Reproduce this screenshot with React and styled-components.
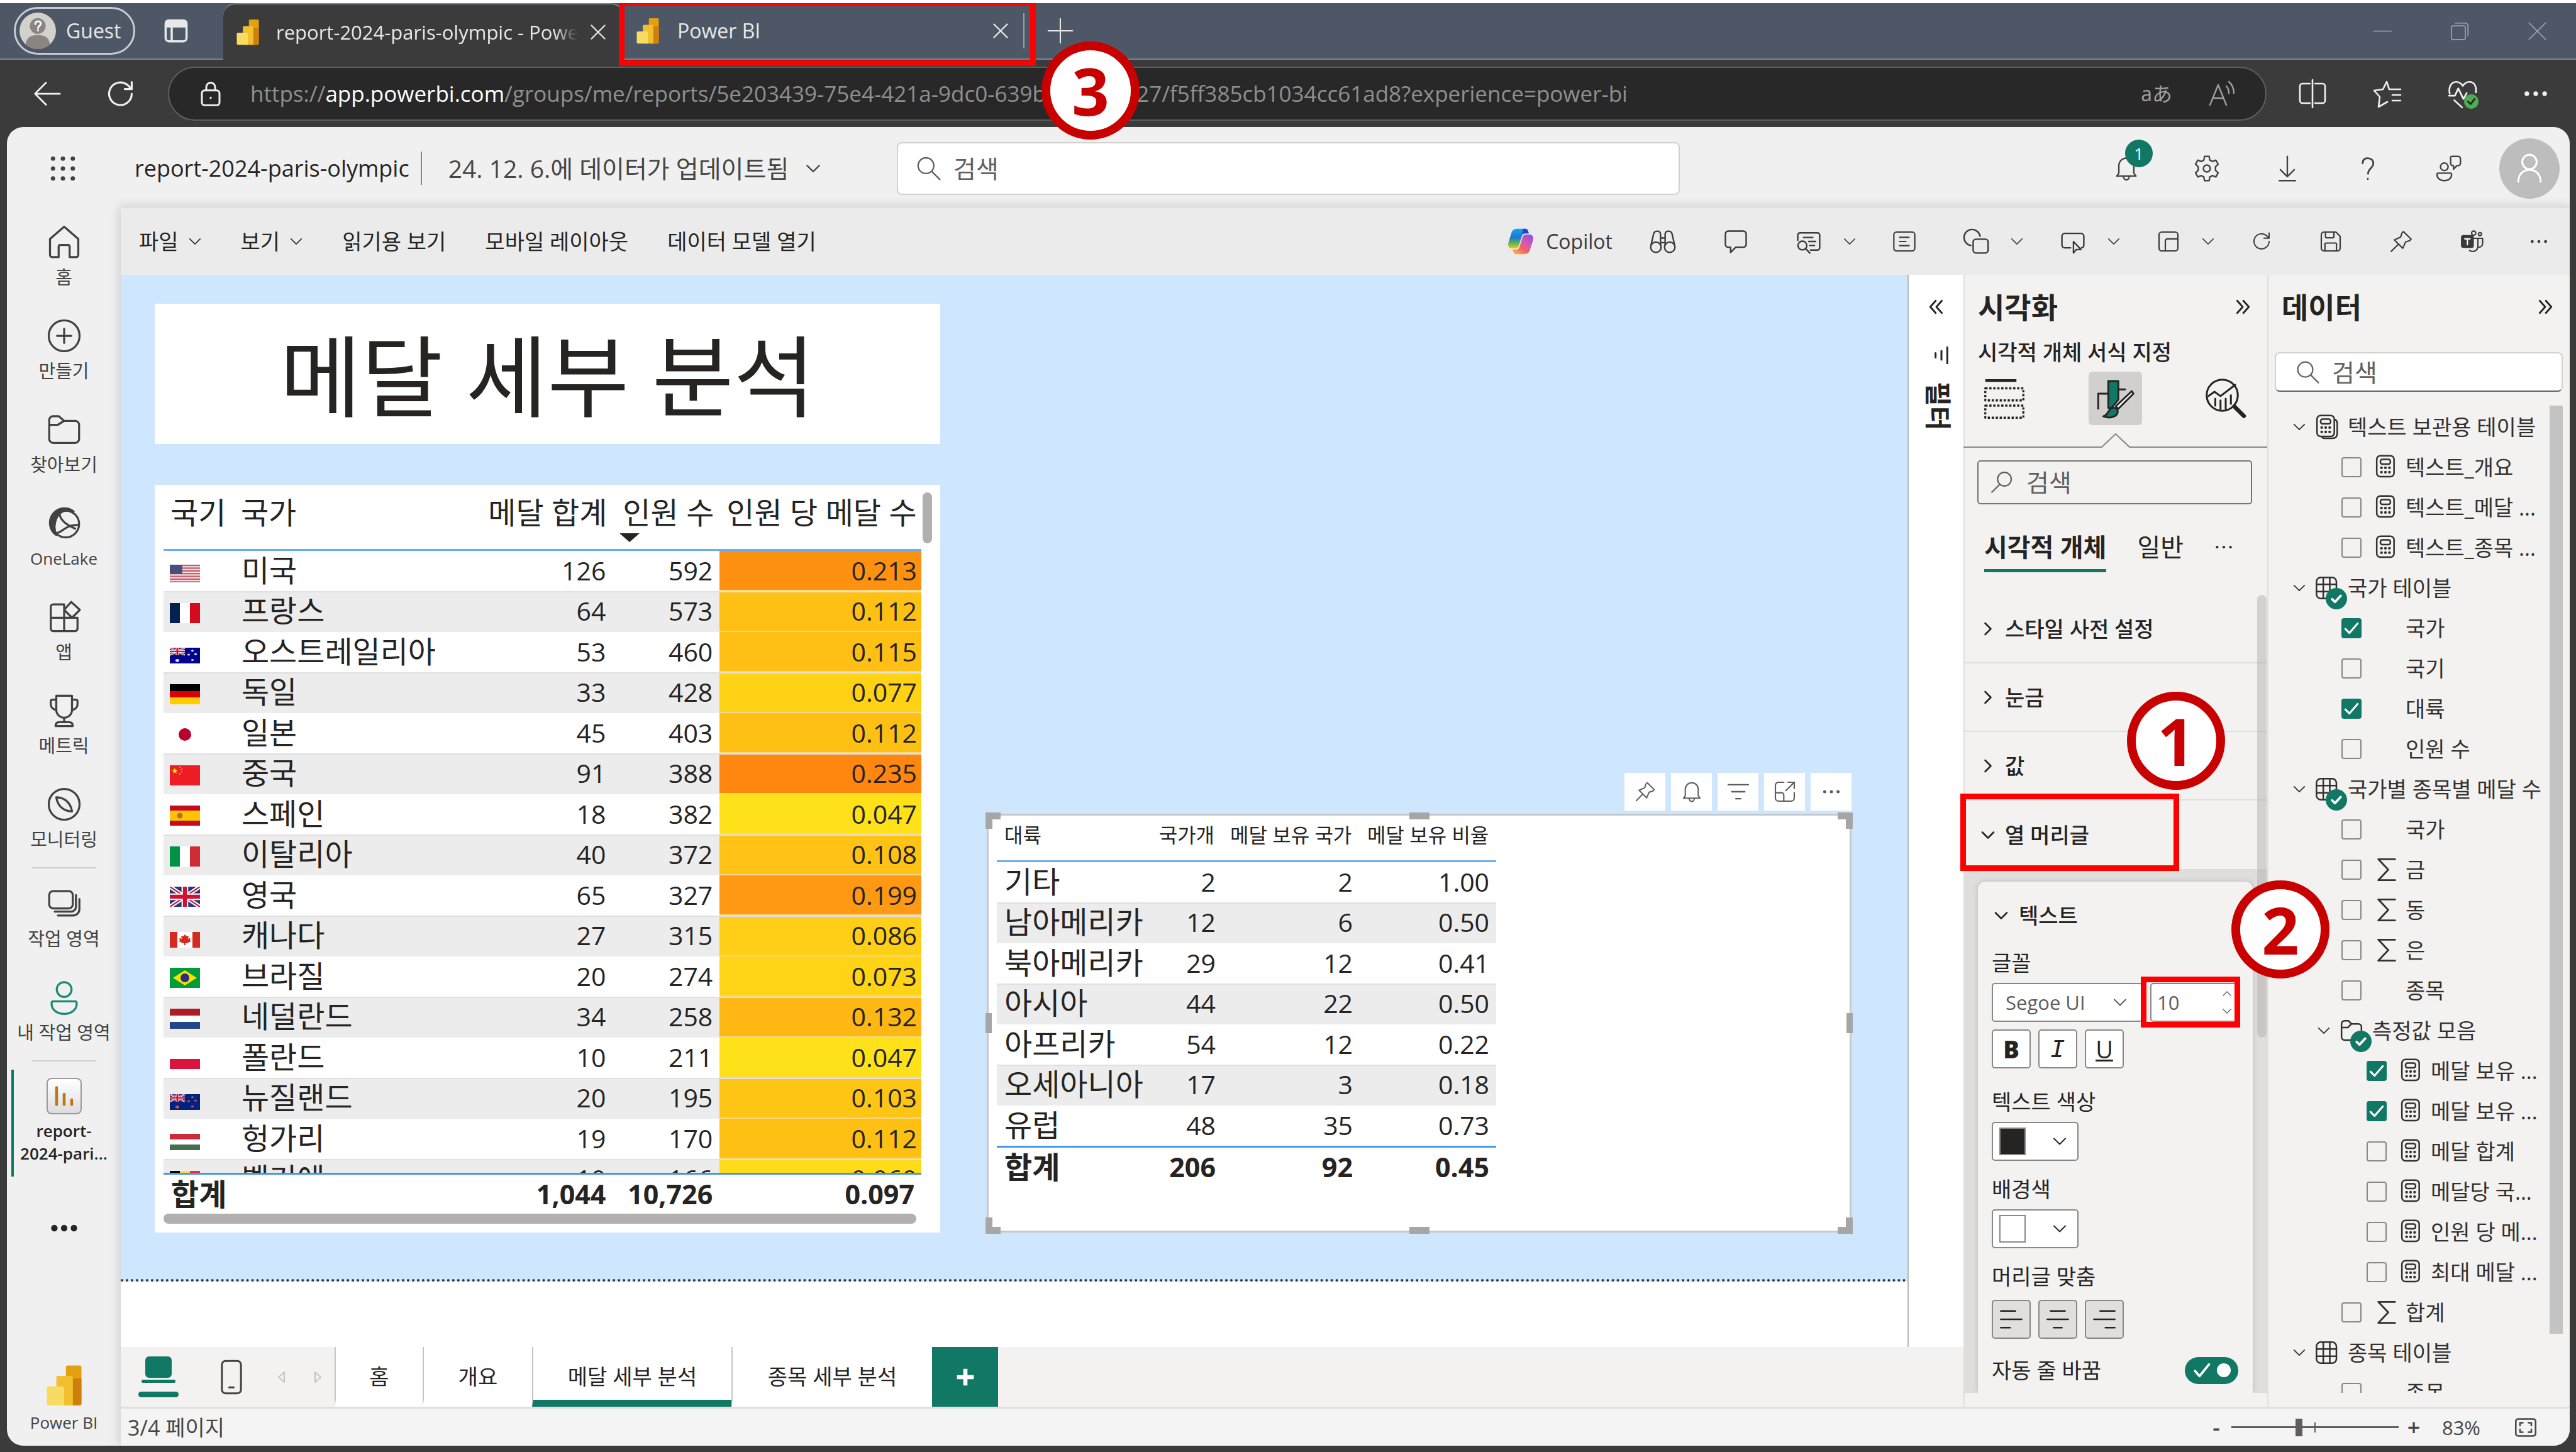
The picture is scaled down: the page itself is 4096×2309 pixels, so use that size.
import React from "react";
import styled, { createGlobalStyle, css } from "styled-components";

const LATIN = '"Open Sans", "Noto Sans", "Noto Sans CJK KR", sans-serif';
const GREEN = "#117865";
const RED = "#ff0000";
const DARK = "#3b3b3b";
const PANE = "#f3f2f1";
const INK = "#252423";

const Global = createGlobalStyle`
  *, *::before, *::after { box-sizing: border-box; }
  html, body { margin: 0; background: ${DARK}; }
  body { font-family: ${LATIN}; color: ${INK}; font-size: 34px; line-height: 44px; }
  button, input, select { font: inherit; color: inherit; margin: 0; }
  button { background: none; border: 0; padding: 0; cursor: pointer; }
  table { border-spacing: 0; }
  th { font-weight: 400; text-align: left; }
  td, th { padding: 0; }
`;

/* ---------- icons ---------- */

const Svg = styled.svg`
  display: block;
  flex: none;
  width: ${(p) => p.$w || p.$s}px;
  height: ${(p) => p.$s}px;
  fill: none;
  stroke: currentColor;
  stroke-width: ${(p) => p.$k || 1.3};
  stroke-linecap: round;
  stroke-linejoin: round;
`;

const Icon = ({ s = 44, k, w, box = "0 0 24 24", children }) => (
  <Svg $s={s} $w={w} $k={k} viewBox={box} aria-hidden="true">{children}</Svg>
);

const Chevron = ({ s = 24, dir = "down", k = 2 }) => {
  const d = { down: "M3 7.5 12 16.5 21 7.5", up: "M3 16.5 12 7.5 21 16.5", right: "M7.5 3 16.5 12 7.5 21" }[dir];
  return <Icon s={s} k={k}><path d={d} /></Icon>;
};

const DoubleChevron = ({ left }) => (
  <Icon s={26} k={2.6}>
    {left ? <path d="M11 3 3 12 11 21M20 3 12 12 20 21" /> : <path d="M4 3 12 12 4 21M13 3 21 12 13 21" />}
  </Icon>
);

const Cross = ({ s = 26, k = 2 }) => <Icon s={s} k={k}><path d="M3 3 21 21M21 3 3 21" /></Icon>;

const Dots = ({ s = 34, r = 2.2 }) => (
  <Icon s={s} k={0}>
    <g fill="currentColor" stroke="none"><circle cx="3.5" cy="12" r={r} /><circle cx="12" cy="12" r={r} /><circle cx="20.5" cy="12" r={r} /></g>
  </Icon>
);

const Magnifier = ({ s = 40, flip }) => (
  <Icon s={s} k={1.3}>
    {flip ? <><circle cx="14.5" cy="9" r="6.5" /><path d="M10 14 2.5 21.5" /></> : <><circle cx="10" cy="9.5" r="6.8" /><path d="M15 14.5 22 21.5" /></>}
  </Icon>
);

const PinIcon = ({ s = 40 }) => (
  <Icon s={s}><path d="M14.2 2.5 21.500 9.800 20 11.300 16.200 12.500 13.500 18.500 5.500 10.500 11.500 7.800 12.700 4ZM9 15 2.500 21.500" /></Icon>
);

const BellIcon = ({ s = 44 }) => (
  <Icon s={s}><path d="M5.500 16V9.500a6.500 6.500 0 0 1 13 0V16l1.800 2.500H3.700ZM9.500 19a2.500 2.800 0 0 0 5 0" /></Icon>
);

const PowerBiLogo = ({ s = 44 }) => (
  <Svg $s={s} viewBox="0 0 24 24" aria-hidden="true">
    <g stroke="none">
      <rect x="13" y="0.500" width="9" height="23" rx="1" fill="#e3a010" />
      <path d="M17 8h5v14.500a1 1 0 0 1-1 1h-4Z" fill="#cf7f0b" />
      <path d="M7.500 7.500a1 1 0 0 1 1-1h7.500a1 1 0 0 1 1 1v16H7.500Z" fill="#f0c02f" />
      <path d="M2 13.500a1 1 0 0 1 1-1h7.500a1.500 1.500 0 0 1 1.500 1.500v9.500H3a1 1 0 0 1-1-1Z" fill="#f8dc62" />
    </g>
  </Svg>
);

const CopilotLogo = () => (
  <Svg $s={44} viewBox="0 0 24 24" aria-hidden="true">
    <defs>
      <linearGradient id="cpA" x1="0" y1="0" x2="0" y2="1"><stop offset="0" stopColor="#12a7ee" /><stop offset="0.450" stopColor="#1d74d8" /><stop offset="0.700" stopColor="#4db35a" /><stop offset="1" stopColor="#f2c516" /></linearGradient>
      <linearGradient id="cpB" x1="1" y1="0" x2="0.300" y2="1"><stop offset="0" stopColor="#8a4be0" /><stop offset="0.450" stopColor="#d557b6" /><stop offset="0.750" stopColor="#f2655e" /><stop offset="1" stopColor="#ffa24c" /></linearGradient>
    </defs>
    <g stroke="none">
      <path d="M10 1h6c1.800 0 2.400 1.500 3 4h-3.500c-1.300 0-2 .8-2.500 2.300l-2.500 8c-.6 2-1.600 2.700-3.500 2.700H4.500C1.500 18 .6 15.600 1.500 12.500L4 4.500C4.800 2 6.500 1 10 1Z" fill="url(#cpA)" />
      <path d="M14 1h2c1.800 0 2.400 1.500 3 4h-3.500c-1 0-1.800.5-2.200 1.500Z" fill="#1b48cf" />
      <path d="M14 23H8c-1.800 0-2.400-1.500-3-4h3.500c1.300 0 2-.8 2.500-2.300l2.500-8C14.100 6.700 15.100 6 17 6h2.500c3 0 3.900 2.400 3 5.500L20 19.500c-.8 2.500-2.500 3.500-6 3.500Z" fill="url(#cpB)" />
    </g>
  </Svg>
);

const CalcIcon = ({ s = 40, stacked }) => (
  <Icon s={s} k={1.500}>
    {stacked && <path d="M20 5c1.300.8 1.800 1.800 1.800 3.500V18c0 3-1.500 4.800-4.800 4.800h-7c-1.500 0-2.400-.5-3-1.300" />}
    <rect x="2.500" y="1" width="16.500" height="20" rx="3.500" />
    <rect x="6" y="4.500" width="9.500" height="4.500" rx="1.800" />
    <g fill="currentColor" stroke="none">
      {[12.500, 16.700].map((y) => [7, 10.800, 14.600].map((x) => <circle key={x + "-" + y} cx={x} cy={y} r="1.300" />))}
    </g>
  </Icon>
);

const TableIcon = () => (
  <Icon s={40} k={1.500}><rect x="2" y="2" width="19" height="20" rx="4" /><path d="M8.500 2v20M14.700 2v20M2 8.500h19M2 15.500h19" /></Icon>
);

const FolderIcon = () => (
  <Icon s={40} k={1.500}><path d="M2.500 7V5.500a3 3 0 0 1 3-3h3.500l3 3h6.500a3 3 0 0 1 3 3v9.500a3 3 0 0 1-3 3h-13a3 3 0 0 1-3-3ZM2.500 9h6l3.500-3.500" /></Icon>
);

const SigmaIcon = () => <Icon s={40} k={1.700}><path d="M20 2H4l9.500 10L4 22h16" /></Icon>;

const navIcons = {
  home: <path d="M3 10 12 2.200 21 10v10.200a1.300 1.300 0 0 1-1.300 1.300H15.500v-6.700a1 1 0 0 0-1-1h-5a1 1 0 0 0-1 1v6.700H4.300A1.300 1.300 0 0 1 3 20.200Z" />,
  create: <><circle cx="12" cy="12" r="9.800" /><path d="M12 7.500v9M7.500 12h9" /></>,
  browse: <path d="M2.500 7.500V6a2.500 2.500 0 0 1 2.500-2.500h3.500l3.500 3h7A2.500 2.500 0 0 1 21.500 9v9a2.500 2.500 0 0 1-2.500 2.500H5A2.500 2.500 0 0 1 2.500 18ZM2.500 9h5.500l4-2.500" />,
  lake: <>
    <path d="M5 6a9.300 9.300 0 0 1 13-1.500c-5-1.500-9 0-11 4.500-1.300 3-1.500 7 0 10.500A9.300 9.300 0 0 1 5 6Z" fill="currentColor" />
    <circle cx="13" cy="12.500" r="8.500" /><path d="M9 6c1 5 5 7 10 9.500M6 18.500c5 0 6-5.500 15-5.500" />
  </>,
  apps: <path d="M3.500 5.500a1.500 1.500 0 0 1 1.500-1.500h7v17H5a1.500 1.500 0 0 1-1.500-1.500ZM3.500 12.500h17v7a1.500 1.500 0 0 1-1.500 1.500h-7M16.500 2.500 22 7.500l-5 5-5-5Z" />,
  trophy: <path d="M7 2.500h10v9a5 5 0 0 1-10 0ZM7 5H4.500a1 1 0 0 0-1 1v2a3.500 3.500 0 0 0 3.500 3.500M17 5h2.500a1 1 0 0 1 1 1v2a3.500 3.500 0 0 1-3.500 3.500M12 16.500v2.500M6.500 21.800c0-1.800 1-2.500 2.500-2.500h6c1.500 0 2.500.7 2.500 2.500Z" />,
  compass: <><circle cx="12" cy="12" r="9.800" /><path d="M7 7.500c4 0 9 2.500 10 9-4.500 0-9-2.500-10-9Z" /></>,
  spaces: <><rect x="2.500" y="4" width="15" height="11" rx="2.500" /><path d="M19.500 6.500v7.500a3 3 0 0 1-3 3H6M21.700 9v6.500a4 4 0 0 1-4 4H8" /></>,
  person: <><circle cx="12" cy="7" r="4.700" /><path d="M5 14.500h14c.8 0 1 .5 1 1.500 0 4-3.500 6.500-8 6.500S4 20 4 16c0-1 .2-1.500 1-1.500Z" /></>,
};

/* ---------- browser frame ---------- */

const Window = styled.div`
  height: 100vh;
  display: flex;
  flex-direction: column;
  background: ${DARK};
  border-top: 5px solid #fff;
  overflow: hidden;
`;

const TabStrip = styled.div`
  position: relative;
  z-index: 2;
  display: flex;
  flex: none;
  height: 90px;
  align-items: center;
  background: #4e5766;
  border-bottom: 2px solid #7b8491;
  color: #e8e8e8;
  padding-left: 22px;
`;

const GuestPill = styled.button`
  display: flex;
  align-items: center;
  gap: 16px;
  width: 193px;
  height: 76px;
  padding-left: 6px;
  border: 3px solid #c9ccd2;
  border-radius: 38px;
  font-size: 32px;
`;

const SidebarToggle = styled.button`
  margin: 0 54px 0 44px;
`;

const Tab = styled.div`
  position: relative;
  display: flex;
  align-items: center;
  align-self: stretch;
  width: ${(p) => (p.$active ? 636 : 640)}px;
  padding: 0 26px 0 18px;
  gap: ${(p) => (p.$active ? 24 : 26)}px;
  margin-bottom: ${(p) => (p.$active ? -2 : 0)}px;
  background: ${(p) => (p.$active ? DARK : "transparent")};
  border-radius: 20px 20px 0 0;
  border-top: ${(p) => (p.$active ? "2px solid #7b8491" : "0")};
  font-size: ${(p) => (p.$active ? 31 : 32)}px;
`;

const TabTitle = styled.span`
  flex: 1;
  overflow: hidden;
  white-space: nowrap;
  ${(p) => p.$fade && css`
    margin-right: -6px;
    -webkit-mask-image: linear-gradient(90deg, #000 92%, transparent);
    mask-image: linear-gradient(90deg, #000 92%, transparent);
  `}
`;

const TabRule = styled.span`
  align-self: center;
  width: 2px;
  height: 56px;
  margin-left: -4px;
  background: #9aa0aa;
`;

const NewTab = styled.button`
  margin-left: 36px;
`;

const WindowButtons = styled.div`
  display: flex;
  gap: 94px;
  margin-left: auto;
  margin-right: 47px;
  color: #a4a9b2;
`;

const MarkBox = styled.span`
  position: absolute;
  left: ${(p) => p.$x}px;
  top: ${(p) => p.$y}px;
  width: ${(p) => p.$w}px;
  height: ${(p) => p.$h}px;
  border: 9px solid ${RED};
  pointer-events: none;
  z-index: 3;
`;

const MarkNumber = styled.span`
  position: absolute;
  left: ${(p) => p.$x}px;
  top: ${(p) => p.$y}px;
  display: grid;
  place-items: center;
  width: 156px;
  height: 156px;
  border: 14px solid #c80000;
  border-radius: 50%;
  background: #fff;
  color: #c80000;
  font-size: 104px;
  line-height: 104px;
  font-weight: 700;
  pointer-events: none;
  z-index: 4;
`;

const AddressRow = styled.div`
  display: flex;
  flex: none;
  align-items: center;
  height: 107px;
  padding: 0 44px 0 53px;
  color: #f0f0f0;
`;

const NavButtons = styled.div`
  display: flex;
  gap: 73px;
  margin-right: 53px;
`;

const AddressPill = styled.div`
  flex: 1;
  display: flex;
  align-items: center;
  height: 86px;
  padding: 0 44px 0 45px;
  gap: 42px;
  border: 2px solid #5e5e5e;
  border-radius: 43px;
  background: #282828;
`;

const Url = styled.span`
  flex: 1;
  white-space: nowrap;
  overflow: hidden;
  color: #8f8f8f;
  font-size: 35px;
  b { color: #fff; font-weight: 400; }
`;

const PillIcons = styled.div`
  display: flex;
  gap: 56px;
  align-items: center;
  color: #a0a0a0;
  font-size: 32px;
`;

const BrowserIcons = styled.div`
  display: flex;
  gap: 71px;
  margin-left: 49px;
`;

/* ---------- app shell ---------- */

const AppFrame = styled.div`
  flex: 1;
  display: flex;
  flex-direction: column;
  min-height: 0;
  margin: 0 10px 10px 11px;
  border-radius: 26px;
  overflow: hidden;
  background: #f0f0f0;
`;

const Header = styled.header`
  display: grid;
  flex: none;
  grid-template-columns: minmax(0, 1415fr) minmax(0, 1245fr) minmax(0, 1415fr);
  align-items: center;
  height: 127px;
  padding-top: 4px;
`;

const HeaderLeft = styled.div`
  display: flex;
  align-items: center;
  padding-left: 68px;
  white-space: nowrap;
`;

const ReportName = styled.span`
  margin-left: 93px;
  font-size: 36px;
`;

const HeaderRule = styled.span`
  width: 2px;
  height: 53px;
  margin: 0 42px 0 18px;
  background: #8a8886;
`;

const UpdatedButton = styled.button`
  display: flex;
  align-items: center;
  gap: 26px;
  font-size: 39px;
  color: #484644;
`;

const HeaderSearch = styled.label`
  display: flex;
  align-items: center;
  gap: 18px;
  height: 84px;
  padding: 0 26px;
  border: 2px solid #d1d1d1;
  border-radius: 8px;
  background: #fff;
  color: #616161;
`;

const TextInput = styled.input`
  flex: 1;
  min-width: 0;
  border: 0;
  outline: 0;
  padding: 0;
  background: transparent;
  font-size: 39px;
  &::placeholder { color: #616161; opacity: 1; }
`;

const HeaderRight = styled.div`
  display: flex;
  align-items: center;
  justify-content: flex-end;
  gap: 84px;
  padding-right: 16px;
  color: #424242;
`;

const BellButton = styled.button`
  position: relative;
`;

const Count = styled.span`
  position: absolute;
  left: 20px;
  top: -24px;
  width: 44px;
  height: 44px;
  border-radius: 50%;
  background: ${GREEN};
  color: #fff;
  font-size: 26px;
  line-height: 44px;
  text-align: center;
`;

const Avatar = styled.button`
  display: grid;
  place-items: center;
  width: 96px;
  height: 96px;
  margin-left: -25px;
  border-radius: 50%;
  background: #bdbdbd;
  color: #fff;
`;

const Body = styled.div`
  flex: 1;
  display: flex;
  min-height: 0;
`;

const SideNav = styled.nav`
  display: flex;
  flex-direction: column;
  flex: none;
  width: 181px;
  padding: 2px 0 4px;
`;

const NavItem = styled.a`
  position: relative;
  display: flex;
  flex: none;
  flex-direction: column;
  align-items: center;
  gap: 8px;
  height: ${(p) => (p.$tall ? 185 : 149)}px;
  padding-top: 24px;
  color: ${(p) => (p.$strong ? "#242424" : "#424242")};
  text-decoration: none;
  text-align: center;
  white-space: nowrap;
  font-size: ${(p) => (p.$latin ? 26 : 29)}px;
  font-weight: ${(p) => (p.$strong ? 600 : 400)};
  line-height: 36px;
  ${(p) => p.$strong && css`
    &::before {
      content: "";
      position: absolute;
      left: 7px;
      top: 11px;
      bottom: 4px;
      width: 4px;
      background: ${GREEN};
    }
  `}
`;

const NavRule = styled.hr`
  flex: none;
  width: 102px;
  height: 2px;
  margin: 5px auto 2px;
  border: 0;
  background: #cfcfcf;
`;

const ReportTile = styled.span`
  display: grid;
  place-items: center;
  width: 56px;
  height: 58px;
  border: 2px solid #9a9a9a;
  border-radius: 8px;
  background: linear-gradient(#fff, #ddd);
`;

const MoreButton = styled.button`
  align-self: center;
  margin-top: 56px;
`;

const NavFoot = styled.div`
  margin-top: auto;
`;

const Main = styled.main`
  flex: 1;
  display: flex;
  flex-direction: column;
  min-width: 0;
  box-shadow: -2px 0 16px rgba(0, 0, 0, 0.16);
`;

const Ribbon = styled.div`
  display: flex;
  flex: none;
  align-items: center;
  justify-content: space-between;
  height: 108px;
  padding: 0 34px 0 29px;
  background: #ebebeb;
  border-top: 2px solid #e0e0e0;
`;

const RibbonMenu = styled.div`
  display: flex;
  gap: 62px;
`;

const MenuButton = styled.button`
  display: flex;
  align-items: center;
  gap: 15px;
  white-space: nowrap;
`;

const RibbonTools = styled.div`
  display: flex;
  align-items: center;
  gap: 72px;
  color: #3b3a39;
`;

const SplitButton = styled.button`
  display: flex;
  align-items: center;
  gap: 32px;
  margin-right: -16px;
`;

const CopilotButton = styled.button`
  display: flex;
  align-items: center;
  gap: 18px;
  font-size: 32px;
  margin-right: -14px;
`;

const Work = styled.div`
  flex: 1;
  display: grid;
  grid-template-columns: minmax(0, 1fr) 483px 481px;
  grid-template-rows: minmax(0, 1fr);
  min-height: 0;
`;

const Stage = styled.section`
  display: flex;
  flex-direction: column;
  min-width: 0;
  min-height: 0;
`;

const StageRow = styled.div`
  flex: 1;
  display: flex;
  min-height: 0;
`;

const CanvasColumn = styled.div`
  flex: 1;
  display: flex;
  flex-direction: column;
  min-width: 0;
  background: #fff;
  border-right: 2px solid #b8b8b8;
`;

const Canvas = styled.div`
  display: grid;
  grid-template-columns: minmax(0, 1250fr) minmax(0, 1376fr);
  grid-template-rows: minmax(0, 1fr);
  column-gap: 74px;
  flex: 1;
  min-height: 0;
  padding: 46px 89px 74px 54px;
  background: #cfe6ff;
  border-bottom: 4px dotted #333;
`;

const Underlay = styled.div`
  flex: none;
  height: 104px;
`;

const LeftVisuals = styled.div`
  display: flex;
  flex-direction: column;
  gap: 65px;
  min-height: 0;
`;

const TitleCard = styled.h1`
  display: flex;
  flex: none;
  align-items: center;
  justify-content: center;
  height: 223px;
  margin: 0;
  padding-top: 4px;
  background: #fff;
  font-size: 141px;
  line-height: 160px;
  font-weight: 400;
  white-space: nowrap;
`;

const MedalCard = styled.div`
  display: grid;
  grid-template-columns: minmax(0, 1fr) 15px;
  grid-template-rows: minmax(0, 1fr) 16px;
  column-gap: 2px;
  flex: 1;
  min-height: 0;
  padding: 12px 13px 14px 14px;
  background: #fff;
`;

const Bar = styled.span`
  display: block;
  height: ${(p) => p.$h}px;
  margin-right: ${(p) => p.$end || 0}px;
  border-radius: 8px;
  background: #b1b0af;
`;

const DataTable = styled.table`
  display: flex;
  flex-direction: column;
  min-height: 0;
  height: 100%;
  font-size: 48px;
  line-height: 60px;
  white-space: nowrap;
  thead, tbody, tfoot { display: block; flex: none; }
  tbody { overflow: hidden; ${(p) => p.$fill && "flex: 1; min-height: 0;"} }
  tr { display: grid; grid-template-columns: ${(p) => p.$cols}; }
  thead tr { height: ${(p) => p.$head}px; border-bottom: 3px solid #64aef5; align-items: start; }
  tfoot tr { height: 65px; border-top: 3px solid #4397ea; align-items: center; }
  tbody tr { height: 64px; }
  tbody tr:nth-child(even) { height: 65px; background: #ececec; border-top: 2px solid #e0e0e0; }
  tbody tr:nth-child(even) td { line-height: 58px; }
`;

const HeadCell = styled.th`
  padding: ${(p) => (p.$small ? "9px 13px 0 12px" : "2px 9px 0 11px")};
  text-align: ${(p) => (p.$num ? "right" : "left")};
  font-size: ${(p) => (p.$small ? 32 : 48)}px;
  line-height: ${(p) => (p.$small ? 44 : 60)}px;
`;

const SortMark = styled.span`
  display: block;
  width: 0;
  border: 16px solid transparent;
  border-top: 14px solid ${INK};
  border-bottom: 0;
  margin: 3px 0 0 0;
`;

const Cell = styled.td`
  padding: 0 11px 0 12px;
  font-size: ${(p) => (p.$num ? 41 : 48)}px;
  line-height: 62px;
  text-align: ${(p) => (p.$num ? "right" : "left")};
  ${(p) => p.$bold && "font-weight: 700;"}
  ${(p) => p.$bold && p.$num && "font-size: 43px;"}
`;

const FlagCell = styled.td`
  display: flex;
  align-items: flex-end;
  padding: 0 0 14px 10px;
`;

const HeatCell = styled(Cell)`
  padding-right: 7px;
  background: ${(p) => p.$tone};
  border-bottom: 2px solid #f3d98c;
`;

const RightVisuals = styled.div`
  display: flex;
  flex-direction: column;
  justify-content: flex-end;
  gap: 5px;
  min-height: 0;
`;

const VisualTools = styled.div`
  display: flex;
  justify-content: flex-end;
  gap: 9px;
`;

const VisualTool = styled.button`
  display: grid;
  place-items: center;
  width: 65px;
  height: 60px;
  background: #fff;
  color: #605e5c;
`;

const SelectedCard = styled.div`
  position: relative;
  height: 666px;
  padding: 0 0 0 13px;
  background: #fff;
  border: 3px solid #c8c8c8;
`;

const TableBox = styled.div`
  width: 794px;
  height: 590px;
`;

const Handle = styled.span`
  position: absolute;
  ${(p) => p.$at}
`;

const FilterRail = styled.aside`
  display: flex;
  flex-direction: column;
  align-items: center;
  flex: none;
  width: 87px;
  padding-top: 38px;
  background: #fff;
`;

const FilterLabel = styled.span`
  writing-mode: vertical-rl;
  text-orientation: sideways;
  margin: 28px 0 0 6px;
  font-size: 42px;
  font-weight: 700;
`;

const FilterGlyph = styled.span`
  margin: 50px 0 0 16px;
`;

/* ---------- page tabs and status bar ---------- */

const PageBar = styled.div`
  display: flex;
  flex: none;
  height: 95px;
  background: ${PANE};
`;

const ViewButtons = styled.div`
  display: flex;
  align-items: center;
  width: 340px;
  padding-left: 28px;
  color: #424242;
`;

const LayoutButton = styled.button`
  display: flex;
  flex-direction: column;
  align-items: center;
  gap: 14px;
  width: 64px;
  margin-right: ${(p) => p.$after}px;
  color: ${(p) => (p.$on ? GREEN : "#424242")};
  ${(p) => p.$on && css`
    &::after { content: ""; width: 64px; height: 9px; border-radius: 5px; background: ${GREEN}; }
  `}
`;

const PagerButton = styled.button`
  width: 24px;
  margin-right: 33px;
  color: #b8b6b4;
`;

const PageTab = styled.button`
  width: ${(p) => p.$w}px;
  background: #fff;
  border-left: 2px solid #c8c6c4;
  border-bottom: 11px solid ${(p) => (p.$on ? GREEN : "#fff")};
  padding-top: 10px;
  white-space: nowrap;
`;

const AddPage = styled.button`
  display: grid;
  place-items: center;
  width: 105px;
  background: ${GREEN};
  color: #fff;
`;

const Status = styled.footer`
  display: flex;
  flex: none;
  align-items: center;
  height: 62px;
  padding: 0 52px 0 11px;
  background: #f4f4f4;
  border-top: 3px solid #e1dfdd;
  color: #484644;
`;

const ZoomGroup = styled.div`
  display: flex;
  align-items: center;
  gap: 12px;
  margin-left: auto;
`;

const ZoomRange = styled.input`
  appearance: none;
  width: 266px;
  height: 28px;
  background: linear-gradient(#605e5c, #605e5c) center / 100% 3px no-repeat, linear-gradient(#605e5c, #605e5c) 50% 50% / 2px 16px no-repeat;
  &::-webkit-slider-thumb {
    appearance: none;
    width: 11px;
    height: 28px;
    background: #605e5c;
  }
`;

const ZoomSign = styled.button`
  font-size: 36px;
  font-weight: 600;
  width: 24px;
`;

const ZoomValue = styled.span`
  margin: 0 42px 0 21px;
  font-size: 31px;
`;

/* ---------- right panes ---------- */

const Pane = styled.aside`
  position: relative;
  z-index: ${(p) => p.$z || 0};
  display: flex;
  flex-direction: column;
  min-height: 0;
  background: ${PANE};
  box-shadow: inset 2px 0 #e1dfdd;
  padding-bottom: 22px;
`;

const PaneHead = styled.div`
  display: flex;
  flex: none;
  align-items: center;
  justify-content: space-between;
  height: 96px;
  padding: 6px 26px 0 23px;
`;

const PaneTitle = styled.h2`
  margin: 0;
  font-size: 46px;
  line-height: 60px;
  font-weight: 600;
`;

const SubTitle = styled.h3`
  flex: none;
  margin: 5px 0 9px 23px;
  font-size: 34px;
  line-height: 44px;
  font-weight: 500;
`;

const ModeRow = styled.div`
  display: flex;
  flex: none;
  justify-content: space-between;
  align-items: center;
  height: 85px;
  padding: 0 33px 0 32px;
`;

const ModeButton = styled.button`
  display: grid;
  place-items: center;
  height: 85px;
  ${(p) => p.$on && "width: 85px; background: #d2d0ce; border-radius: 6px;"}
`;

const NotchLine = styled.div`
  display: flex;
  flex: none;
  align-items: flex-end;
  height: 36px;
  color: #8a8886;
  &::before, &::after { content: ""; flex: 1; height: 2px; background: #8a8886; }
`;

const FormatSearch = styled.label`
  display: flex;
  flex: none;
  align-items: center;
  gap: 19px;
  height: 70px;
  margin: 20px 24px 0 22px;
  padding: 0 17px;
  border: 2px solid #767472;
  border-radius: 5px;
  color: #605e5c;
`;

const FormatTabs = styled.div`
  display: flex;
  flex: none;
  align-items: flex-start;
  gap: 49px;
  height: 144px;
  padding: 44px 0 0 33px;
  font-size: 40px;
`;

const FormatTab = styled.button`
  height: 64px;
  line-height: 48px;
  padding-bottom: 12px;
  white-space: nowrap;
  border-bottom: 5px solid ${(p) => (p.$on ? GREEN : "transparent")};
  font-weight: ${(p) => (p.$on ? 700 : 400)};
`;

const FormatList = styled.div`
  flex: 1;
  display: flex;
  min-height: 0;
  overflow: hidden;
  position: relative;
`;

const Sections = styled.div`
  flex: 1;
  display: flex;
  flex-direction: column;
  min-width: 0;
`;

const FormatThumb = styled.span`
  position: absolute;
  right: 1px;
  top: 0;
  width: 15px;
  height: 704px;
  border-radius: 8px;
  background: rgba(180, 174, 170, 0.5);
`;

const SectionButton = styled.button`
  display: flex;
  align-items: center;
  gap: 15px;
  flex: none;
  height: 109px;
  padding-left: 27px;
  font-weight: 500;
  text-align: left;
  border-bottom: ${(p) => (p.$last ? "0" : "2px solid #e1dfdd")};
`;

const OpenArea = styled.div`
  flex: 1;
  min-height: 0;
  padding: 20px 23px 0;
  background: #dfdedd;
`;

const SubCard = styled.div`
  height: 100%;
  padding: 0 23px 0 22px;
  border-radius: 12px 12px 0 0;
  background: ${PANE};
  box-shadow: 0 0 8px rgba(0, 0, 0, 0.16);
`;

const SubHead = styled.button`
  display: flex;
  align-items: center;
  gap: 16px;
  height: 108px;
  padding-left: 3px;
  font-weight: 500;
`;

const Group = styled.div`
  display: flex;
  flex-direction: column;
  align-items: flex-start;
  gap: ${(p) => p.$gap || 11}px;
  padding-bottom: ${(p) => p.$after || 24}px;
`;

const GroupLabel = styled.label`
  line-height: 42px;
  white-space: nowrap;
`;

const Controls = styled.div`
  display: flex;
  gap: 12px;
`;

const field = css`
  height: 62px;
  border: 2px solid #8a8886;
  border-radius: 5px;
  background: #fff;
`;

const SelectWrap = styled.span`
  ${field}
  position: relative;
  display: flex;
  align-items: center;
  width: 240px;
  padding-right: 22px;
  color: #605e5c;
`;

const FontSelect = styled.select`
  appearance: none;
  flex: 1;
  min-width: 0;
  height: 100%;
  padding: 0 0 0 20px;
  border: 0;
  background: transparent;
  font-size: 31px;
`;

const SizeWrap = styled(SelectWrap)`
  width: 140px;
  padding-right: 8px;
`;

const SizeInput = styled.input`
  appearance: textfield;
  flex: 1;
  min-width: 0;
  padding: 0 0 0 9px;
  border: 0;
  background: transparent;
  font-size: 31px;
  &::-webkit-inner-spin-button { appearance: none; }
`;

const Spinner = styled.span`
  display: flex;
  flex-direction: column;
  gap: 12px;
`;

const SquareButton = styled.button`
  ${field}
  width: 62px;
  display: grid;
  place-items: center;
  background: ${(p) => (p.$grey ? "#e1dfdd" : "#fff")};
  font-size: 38px;
  font-weight: ${(p) => (p.$b ? 800 : 400)};
  font-style: ${(p) => (p.$i ? "italic" : "normal")};
  text-decoration: ${(p) => (p.$u ? "underline" : "none")};
  ${(p) => p.$i && 'font-family: "DejaVu Sans Mono", monospace;'}
`;

const ColorButton = styled.button`
  ${field}
  display: flex;
  align-items: center;
  justify-content: space-between;
  width: 138px;
  padding: 0 16px 0 10px;
`;

const Swatch = styled.span`
  width: 42px;
  height: 44px;
  background: ${(p) => p.$c};
  border: 2px solid #8a8886;
`;

const ToggleRow = styled.label`
  display: flex;
  align-items: center;
  justify-content: space-between;
  height: 52px;
  white-space: nowrap;
`;

const HiddenCheck = styled.input`
  position: absolute;
  opacity: 0;
`;

const Switch = styled.span`
  display: flex;
  align-items: center;
  justify-content: space-between;
  width: 85px;
  height: 43px;
  padding: 0 12px 0 14px;
  border-radius: 22px;
  background: ${GREEN};
  color: #fff;
  &::after { content: ""; width: 22px; height: 22px; border-radius: 50%; background: #fff; }
`;

const DataSearch = styled.label`
  display: flex;
  flex: none;
  align-items: center;
  gap: 18px;
  height: 63px;
  margin: 27px 11px 0 12px;
  padding: 0 29px;
  border: 2px solid #d1d1d1;
  border-bottom-color: #616161;
  border-radius: 8px;
  background: #fff;
  color: #616161;
`;

const TreeArea = styled.div`
  flex: 1;
  display: flex;
  min-height: 0;
  margin-top: 22px;
  padding-right: 11px;
  overflow: hidden;
`;

const Tree = styled.ul`
  flex: 1;
  min-width: 0;
  margin: 0;
  padding: 2px 0 0;
  list-style: none;
`;

const TreeThumb = styled.span`
  width: 21px;
  height: 1476px;
  background: #c3c3c3;
`;

const TreeRow = styled.li`
  display: flex;
  align-items: center;
  height: 64px;
  padding-left: ${(p) => p.$pad}px;
  white-space: nowrap;
  color: #323130;
`;

const TreeToggle = styled.button`
  display: flex;
  align-items: center;
  gap: 13px;
`;

const TreeIcon = styled.span`
  position: relative;
  display: grid;
  place-items: center;
  width: 40px;
  height: 40px;
`;

const TickBadge = styled.span`
  position: absolute;
  left: 18px;
  top: 20px;
  display: grid;
  place-items: center;
  width: 34px;
  height: 34px;
  border-radius: 50%;
  background: ${GREEN};
  color: #fff;
`;

const FieldLabel = styled.label`
  display: flex;
  align-items: center;
  gap: 20px;
`;

const Check = styled.span`
  display: grid;
  place-items: center;
  width: 32px;
  height: 32px;
  border: 2px solid ${(p) => (p.$on ? GREEN : "#8a8886")};
  border-radius: 4px;
  background: ${(p) => (p.$on ? GREEN : PANE)};
  color: #fff;
`;

const FieldText = styled.span`
  margin-left: -10px;
`;

/* ---------- flags ---------- */

const FlagSvg = styled.svg`
  display: block;
  width: 48px;
  height: ${(p) => p.$h}px;
`;

const vertical = (a, b, c) => <><rect width="16" height="32" fill={a} /><rect x="16" width="16" height="32" fill={b} /><rect x="32" width="16" height="32" fill={c} /></>;
const horizontal = (a, b, c) => <><rect width="48" height="11" fill={a} /><rect y="11" width="48" height="10" fill={b} /><rect y="21" width="48" height="11" fill={c} /></>;
const union = (w, h) => (
  <>
    <rect width={w} height={h} fill="#1f3a80" />
    <path d={`M0 0 ${w} ${h}M${w} 0 0 ${h}`} stroke="#fff" strokeWidth={h / 5} />
    <path d={`M0 0 ${w} ${h}M${w} 0 0 ${h}`} stroke="#d21034" strokeWidth={h / 14} />
    <path d={`M${w / 2} 0V${h}M0 ${h / 2}H${w}`} stroke="#fff" strokeWidth={h / 3} />
    <path d={`M${w / 2} 0V${h}M0 ${h / 2}H${w}`} stroke="#d21034" strokeWidth={h / 5} />
  </>
);
const stars = (c) => [[12, 26, 3], [36, 6, 2], [41, 13, 2], [30, 14, 2], [36, 25, 2]].map(([x, y, r], i) => <circle key={i} cx={x} cy={y} r={r} fill={c} />);

const flags = {
  us: <><rect width="48" height="32" fill="#f4e3e5" />{[0, 1, 2, 3, 4, 5, 6].map((i) => <rect key={i} y={i * 5} width="48" height="2.500" fill="#c8596b" />)}<rect width="20" height="17" fill="#4b4d7c" /></>,
  fr: vertical("#05214f", "#fff", "#d50a20"),
  au: <><rect width="48" height="32" fill="#00058c" /><g>{union(24, 15)}</g>{stars("#dfe3f5")}</>,
  de: horizontal("#000", "#de0000", "#ffce00"),
  jp: <><rect width="48" height="32" fill="#fff" /><circle cx="24" cy="16" r="10" fill="#bc002d" /></>,
  cn: <><rect width="48" height="32" fill="#ee1c25" /><path d="M8 4l1.200 3.500h3.600l-3 2.200 1.100 3.500L8 11l-2.900 2.200 1.100-3.500-3-2.200h3.600Z" fill="#ff0" /><g fill="#f9a01b"><circle cx="16" cy="3" r="1.200" /><circle cx="19" cy="6.500" r="1.200" /><circle cx="19" cy="10.500" r="1.200" /><circle cx="16" cy="14" r="1.200" /></g></>,
  es: <><rect width="48" height="32" fill="#c60b1e" /><rect y="8" width="48" height="16" fill="#ffc400" /><circle cx="16" cy="16" r="4.500" fill="#b56a3a" /></>,
  it: vertical("#009246", "#fff", "#ce2b37"),
  gb: union(48, 32),
  ca: <><rect width="48" height="32" fill="#fff" /><rect width="12" height="32" fill="#d52b1e" /><rect x="36" width="12" height="32" fill="#d52b1e" /><path d="M24 5l3 4 3-1-1 6 4-2-1 5 2 2-7 4h-2v4h-2v-4h-2l-7-4 2-2-1-5 4 2-1-6 3 1Z" fill="#d52b1e" /></>,
  br: <><rect width="48" height="32" fill="#009b3a" /><path d="M24 4 43 16 24 28 5 16Z" fill="#fedf00" /><circle cx="24" cy="16" r="7" fill="#2b2f7c" /></>,
  nl: horizontal("#ae1c28", "#fff", "#21468b"),
  pl: <><rect width="48" height="16" fill="#fff" /><rect y="16" width="48" height="16" fill="#dc143c" /></>,
  nz: <><rect width="48" height="32" fill="#00247d" /><g>{union(24, 15)}</g>{stars("#cc4a6b")}</>,
  hu: horizontal("#cd2a3e", "#fff", "#436f4d"),
  be: vertical("#000", "#fae042", "#ed2939"),
};

/* ---------- data ---------- */

const medals = [
  ["us", 28, "미국", "126", "592", "0.213", "#ff9111"],
  ["fr", 32, "프랑스", "64", "573", "0.112", "#ffc014"],
  ["au", 25, "오스트레일리아", "53", "460", "0.115", "#ffbf14"],
  ["de", 32, "독일", "33", "428", "0.077", "#ffd216"],
  ["jp", 32, "일본", "45", "403", "0.112", "#ffc014"],
  ["cn", 32, "중국", "91", "388", "0.235", "#ff860f"],
  ["es", 32, "스페인", "18", "382", "0.047", "#ffe119"],
  ["it", 32, "이탈리아", "40", "372", "0.108", "#ffc215"],
  ["gb", 32, "영국", "65", "327", "0.199", "#ff9812"],
  ["ca", 25, "캐나다", "27", "315", "0.086", "#ffce16"],
  ["br", 32, "브라질", "20", "274", "0.073", "#ffd417"],
  ["nl", 32, "네덜란드", "34", "258", "0.132", "#ffb713"],
  ["pl", 32, "폴란드", "10", "211", "0.047", "#ffe119"],
  ["nz", 25, "뉴질랜드", "20", "195", "0.103", "#ffc515"],
  ["hu", 26, "헝가리", "19", "170", "0.112", "#ffc014"],
  ["be", 32, "벨기에", "10", "166", "0.060", "#ffdb18"],
];

const continents = [
  ["기타", "2", "2", "1.00"],
  ["남아메리카", "12", "6", "0.50"],
  ["북아메리카", "29", "12", "0.41"],
  ["아시아", "44", "22", "0.50"],
  ["아프리카", "54", "12", "0.22"],
  ["오세아니아", "17", "3", "0.18"],
  ["유럽", "48", "35", "0.73"],
];

const tree = [
  { t: "텍스트 보관용 테이블", k: "calcs" },
  { t: "텍스트_개요", i: "calc" },
  { t: "텍스트_메달 ...", i: "calc" },
  { t: "텍스트_종목 ...", i: "calc" },
  { t: "국가 테이블", k: "table", tick: true },
  { t: "국가", on: true },
  { t: "국기" },
  { t: "대륙", on: true },
  { t: "인원 수" },
  { t: "국가별 종목별 메달 수", k: "table", tick: true },
  { t: "국가" },
  { t: "금", i: "sum" },
  { t: "동", i: "sum" },
  { t: "은", i: "sum" },
  { t: "종목" },
  { t: "측정값 모음", k: "folder", tick: true, deep: true },
  { t: "메달 보유 ...", i: "calc", on: true, deep: true },
  { t: "메달 보유 ...", i: "calc", on: true, deep: true },
  { t: "메달 합계", i: "calc", deep: true },
  { t: "메달당 국...", i: "calc", deep: true },
  { t: "인원 당 메...", i: "calc", deep: true },
  { t: "최대 메달 ...", i: "calc", deep: true },
  { t: "합계", i: "sum" },
  { t: "종목 테이블", k: "table" },
  { t: "종목" },
];

const treeIcons = {
  calcs: <CalcIcon stacked />,
  calc: <CalcIcon />,
  table: <TableIcon />,
  folder: <FolderIcon />,
  sum: <SigmaIcon />,
};

const grip = "background:#a6a6a6;";
const handles = [
  "left:-5px;top:-5px;width:24px;height:26px;border-left:11px solid #a6a6a6;border-top:11px solid #a6a6a6;",
  "right:-5px;top:-5px;width:24px;height:26px;border-right:11px solid #a6a6a6;border-top:11px solid #a6a6a6;",
  "left:-5px;bottom:-5px;width:24px;height:26px;border-left:11px solid #a6a6a6;border-bottom:11px solid #a6a6a6;",
  "right:-5px;bottom:-5px;width:24px;height:26px;border-right:11px solid #a6a6a6;border-bottom:11px solid #a6a6a6;",
  "left:calc(50% - 16px);top:-5px;width:32px;height:11px;" + grip,
  "left:calc(50% - 16px);bottom:-5px;width:32px;height:11px;" + grip,
  "left:-5px;top:calc(50% - 16px);width:10px;height:32px;" + grip,
  "right:-5px;top:calc(50% - 16px);width:10px;height:32px;" + grip,
];

/* ---------- sections ---------- */

function BrowserChrome() {
  return (
    <>
      <TabStrip>
        <GuestPill>
          <Icon s={58} box="0 0 60 60">
            <g stroke="none"><circle cx="30" cy="30" r="30" fill="#d3d1cc" /><circle cx="30" cy="22" r="13" fill="#8a8580" /><path d="M10 52c2-12 9-15 20-15s18 3 20 15c-6 6-13 8-20 8s-14-2-20-8Z" fill="#8a8580" /></g>
            <path d="M26 19c0-6 9-6 9-1 0 4-4.500 3.500-4.500 7.500M30.500 29v.5" stroke="#fff" strokeWidth="3" />
          </Icon>
          Guest
        </GuestPill>
        <SidebarToggle aria-label="사이드바">
          <Icon s={42} k={2}><rect x="2.500" y="2.500" width="19" height="19" rx="3" /><path d="M8 8v13" /><path d="M3 3.500h18V8H3Z" fill="currentColor" /></Icon>
        </SidebarToggle>
        <Tab $active>
          <PowerBiLogo s={42} />
          <TabTitle $fade>report-2024-paris-olympic - Power BI</TabTitle>
          <button aria-label="탭 닫기"><Cross s={28} /></button>
        </Tab>
        <Tab>
          <PowerBiLogo s={42} />
          <TabTitle>Power BI</TabTitle>
          <button aria-label="탭 닫기"><Cross s={28} /></button>
          <MarkBox $x={-7} $y={-5} $w={663} $h={105} />
        </Tab>
        <TabRule />
        <NewTab aria-label="새 탭"><Icon s={42} k={1.200}><path d="M12 1v22M1 12h22" /></Icon></NewTab>
        <WindowButtons>
          <button aria-label="최소화"><Icon s={29}><path d="M0 12h24" /></Icon></button>
          <button aria-label="이전 크기로"><Icon s={29}><rect x="1" y="5" width="18" height="18" rx="2" /><path d="M6 1.500h13a3.500 3.500 0 0 1 3.500 3.500v13" /></Icon></button>
          <button aria-label="닫기"><Icon s={29}><path d="M1 1l22 22M23 1 1 23" /></Icon></button>
        </WindowButtons>
        <MarkNumber $x={1656} $y={61}>3</MarkNumber>
      </TabStrip>
      <AddressRow>
        <NavButtons>
          <button aria-label="뒤로"><Icon k={1.500}><path d="M23 12H1.500M11 2.500 1.500 12l9.500 9.500" /></Icon></button>
          <button aria-label="새로 고침"><Icon k={1.700}><path d="M21.500 12a9.800 9.800 0 1 1-3-7L21.500 8M21.500 2v6h-6" /></Icon></button>
        </NavButtons>
        <AddressPill>
          <Icon k={1.700} s={42}><rect x="4" y="9" width="16" height="13.500" rx="2.500" /><path d="M8 9V6a4 4 0 0 1 8 0v3M12 15.500v.5" /></Icon>
          <Url>https://<b>app.powerbi.com</b>/groups/me/reports/5e203439-75e4-421a-9dc0-639bd60db8427/f5ff385cb1034cc61ad8?experience=power-bi</Url>
          <PillIcons>
            <span>aあ</span>
            <Icon s={48} k={1.200}><path d="M2 21 8.500 5 15 21M4.500 15.500h8M15 6c1.500 1.500 2 3 2 5.500M17 2.500c3 2.500 4 5 4 9" /></Icon>
          </PillIcons>
        </AddressPill>
        <BrowserIcons>
          <button aria-label="분할 화면"><Icon s={48}><path d="M10 4H4a2 2 0 0 0-2 2v11.500a2 2 0 0 0 2 2h6M14 4h6a2 2 0 0 1 2 2v11.500a2 2 0 0 1-2 2h-6M12 1v22" /></Icon></button>
          <button aria-label="즐겨찾기"><Icon s={48}><path d="M13.500 8.500 11.500 2.500 8.500 8.500 1.500 9.500 6 14.500 5 22.500l7-4M14.500 8.500h8M16 13h6.500M16 17.500h6.500" /></Icon></button>
          <button aria-label="브라우저 상태">
            <Icon s={50}><path d="M2 12c-1-5 1-9 5-9 2.500 0 4 1.500 5 3 1-1.500 2.500-3 5-3 4 0 5.500 3.500 5 8M1.500 13.500H6L8.500 8l4 8 2.500-4.500M5.500 17l6 5.500" /><circle cx="18.500" cy="18" r="5.500" fill="#4cae4f" stroke="none" /><path d="m16 18 2 2 3-4" stroke="#222" /></Icon>
          </button>
          <button aria-label="설정 및 기타"><Dots s={40} /></button>
        </BrowserIcons>
      </AddressRow>
    </>
  );
}

function AppHeader() {
  return (
    <Header>
      <HeaderLeft>
        <button aria-label="앱 시작 관리자">
          <Icon s={42} k={0}><g fill="#424242" stroke="none">{[3, 12, 21].map((y) => [3, 12, 21].map((x) => <circle key={x + "-" + y} cx={x} cy={y} r="2" />))}</g></Icon>
        </button>
        <ReportName>report-2024-paris-olympic</ReportName>
        <HeaderRule />
        <UpdatedButton>24. 12. 6.에 데이터가 업데이트됨 <Chevron s={26} /></UpdatedButton>
      </HeaderLeft>
      <HeaderSearch>
        <Magnifier s={44} />
        <TextInput type="text" placeholder="검색" aria-label="검색" />
      </HeaderSearch>
      <HeaderRight>
        <BellButton aria-label="알림"><BellIcon /><Count>1</Count></BellButton>
        <button aria-label="설정">
          <Icon><path d="M10 1.500h4l.6 3.200 2.200 1.200 3-1.200 2 3.500-2.300 2.200v3.200l2.300 2.200-2 3.500-3-1.200-2.200 1.200L14 22.500h-4l-.6-3.200-2.200-1.200-3 1.200-2-3.500 2.300-2.200v-3.200L2.200 8.200l2-3.500 3 1.200 2.200-1.200Z" /><circle cx="12" cy="12" r="3" /></Icon>
        </button>
        <button aria-label="다운로드"><Icon><path d="M12 1.500v17M6 13l6 6 6-6M5 22.500h14" /></Icon></button>
        <button aria-label="도움말"><Icon k={1.500}><path d="M7.500 7.500C7.500 4.500 9.300 3 12 3s4.800 1.700 4.800 4.500c0 4-4.600 4.500-4.600 9M12 20.800v.4" /></Icon></button>
        <button aria-label="피드백"><Icon><circle cx="8.500" cy="10.500" r="3.300" /><path d="M3 16h11c.6 0 .8.500.8 1.300 0 3-2.500 5.200-6.300 5.200s-6.300-2.200-6.300-5.200C2.200 16.500 2.400 16 3 16ZM14.500 1.500h6a2 2 0 0 1 2 2v4a2 2 0 0 1-2 2h-1l-3 3v-3h-.5a2 2 0 0 1-2-2v-4a2 2 0 0 1 .5-2Z" /></Icon></button>
        <Avatar aria-label="계정"><Icon s={50} k={1.500}><circle cx="12" cy="7" r="5.500" /><path d="M3.500 22c0-5.500 3.500-9 8.500-9s8.500 3.500 8.500 9" /></Icon></Avatar>
      </HeaderRight>
    </Header>
  );
}

function Sidebar() {
  const item = (key, label, latin, color) => (
    <NavItem href="#" key={key} $latin={latin}>
      <Icon s={60}><g stroke={color || "currentColor"}>{navIcons[key]}</g></Icon>
      {label}
    </NavItem>
  );
  return (
    <SideNav>
      {item("home", "홈")}
      {item("create", "만들기")}
      {item("browse", "찾아보기")}
      {item("lake", "OneLake", true)}
      {item("apps", "앱")}
      {item("trophy", "메트릭")}
      {item("compass", "모니터링")}
      <NavRule />
      {item("spaces", "작업 영역")}
      {item("person", "내 작업 영역", false, "#1a8a75")}
      <NavRule />
      <NavItem href="#" $strong $latin $tall>
        <ReportTile><Icon s={36} k={3}><path d="M4 3v18M12 10v11M20 16v5" stroke="#bd7615" /></Icon></ReportTile>
        <span>report-<br />2024-pari...</span>
      </NavItem>
      <MoreButton aria-label="더 보기"><Dots s={44} r={2.800} /></MoreButton>
      <NavFoot>
        <NavItem href="#" $latin><PowerBiLogo s={66} />Power BI</NavItem>
      </NavFoot>
    </SideNav>
  );
}

function RibbonBar() {
  return (
    <Ribbon>
      <RibbonMenu>
        <MenuButton>파일 <Chevron s={22} k={1.600} /></MenuButton>
        <MenuButton>보기 <Chevron s={22} k={1.600} /></MenuButton>
        <MenuButton>읽기용 보기</MenuButton>
        <MenuButton>모바일 레이아웃</MenuButton>
        <MenuButton>데이터 모델 열기</MenuButton>
      </RibbonMenu>
      <RibbonTools>
        <CopilotButton><CopilotLogo />Copilot</CopilotButton>
        <button aria-label="찾기"><Icon><circle cx="6" cy="17" r="4.500" /><circle cx="18" cy="17" r="4.500" /><path d="M1.800 15 4 5.500C4.500 2.500 9.500 2 10 5.500V15M22.200 15 20 5.500c-.5-3-5.500-3.500-6 0V15M10 9h4v4h-4Z" /></Icon></button>
        <button aria-label="메모"><Icon><path d="M5.500 3h13A2.500 2.500 0 0 1 21 5.500v9a2.500 2.500 0 0 1-2.500 2.500H12l-4.500 4.500V17h-2A2.500 2.500 0 0 1 3 14.500v-9A2.500 2.500 0 0 1 5.500 3Z" /></Icon></button>
        <SplitButton aria-label="데이터 탐색"><Icon><path d="M2.500 11V6.500a2 2 0 0 1 2-2h15a2 2 0 0 1 2 2v11a2 2 0 0 1-2 2h-6M7.500 8.500h8M12 12h6M13 15.500h4M9.500 18.500l3.500 3.500" /><circle cx="6.500" cy="15.500" r="3.800" /></Icon><Chevron s={22} k={1.600} /></SplitButton>
        <button aria-label="텍스트 상자"><Icon s={40}><rect x="2" y="3" width="20" height="18" rx="2.500" /><path d="M7.500 8h9M7.500 12h6M7.500 16h9" /></Icon></button>
        <SplitButton aria-label="도형"><Icon><path d="M7.500 15.500a7 7 0 1 1 8-8" /><rect x="9.500" y="10" width="13" height="12" rx="2.500" /></Icon><Chevron s={22} k={1.600} /></SplitButton>
        <SplitButton aria-label="단추"><Icon><path d="M10 17.500H5a2.500 2.500 0 0 1-2.500-2.500V7.500A2.500 2.500 0 0 1 5 5h14a2.500 2.500 0 0 1 2.500 2.500V15c0 1.500-.8 2.300-2 2.500M12.500 12v10l2.500-3h4Z" /></Icon><Chevron s={22} k={1.600} /></SplitButton>
        <SplitButton aria-label="시각적 상호 작용"><Icon s={40}><rect x="3" y="3" width="18" height="18" rx="2.500" /><path d="M9 21V11.500a2 2 0 0 1 2-2h10" /></Icon><Chevron s={22} k={1.600} /></SplitButton>
        <button aria-label="새로 고침"><Icon s={36}><path d="M20 12a8 8 0 1 1-2.500-6L20 8.500M20 3v5.500h-5.500" /></Icon></button>
        <button aria-label="저장"><Icon s={40}><path d="M3 5.500A2.500 2.500 0 0 1 5.500 3H17l4 4v11.500a2.500 2.500 0 0 1-2.500 2.500h-13A2.500 2.500 0 0 1 3 18.500ZM7 3v4.500a1 1 0 0 0 1 1h6a1 1 0 0 0 1-1V3M6.500 21v-6.500a1 1 0 0 1 1-1h9a1 1 0 0 1 1 1V21" /></Icon></button>
        <button aria-label="고정"><PinIcon s={40} /></button>
        <button aria-label="Teams">
          <Icon s={40}><rect x="2.500" y="6.500" width="11" height="11" rx="1.500" fill="currentColor" /><path d="M5.500 9.500h5M8 9.500v5.500" stroke="#fff" /><circle cx="14" cy="4" r="2" /><circle cx="20" cy="5" r="1.500" /><path d="M14 9h4v7.500a5 5 0 0 1-8 4M18 9h4.500v5a3.500 3.500 0 0 1-4 3.500" /></Icon>
        </button>
        <button aria-label="기타"><Dots s={30} r={1.900} /></button>
      </RibbonTools>
    </Ribbon>
  );
}

function MedalTable() {
  return (
    <MedalCard>
      <DataTable $fill $head={93} $cols="minmax(0,112fr) minmax(0,391fr) minmax(0,212fr) minmax(0,170fr) minmax(0,321fr)">
        <thead>
          <tr>
            <HeadCell>국기</HeadCell>
            <HeadCell>국가</HeadCell>
            <HeadCell $num>메달 합계</HeadCell>
            <HeadCell $num>인원 수<SortMark /></HeadCell>
            <HeadCell $num>인원 당 메달 수</HeadCell>
          </tr>
        </thead>
        <tbody>
          {medals.map(([flag, h, name, total, people, rate, tone]) => (
            <tr key={flag}>
              <FlagCell><FlagSvg $h={h} viewBox="0 0 48 32" preserveAspectRatio="none">{flags[flag]}</FlagSvg></FlagCell>
              <Cell>{name}</Cell>
              <Cell $num>{total}</Cell>
              <Cell $num>{people}</Cell>
              <HeatCell $num $tone={tone}>{rate}</HeatCell>
            </tr>
          ))}
        </tbody>
        <tfoot>
          <tr>
            <Cell $bold>합계</Cell>
            <td />
            <Cell $num $bold>1,044</Cell>
            <Cell $num $bold>10,726</Cell>
            <Cell $num $bold>0.097</Cell>
          </tr>
        </tfoot>
      </DataTable>
      <Bar $h={81} />
      <Bar $h={16} $end={8} />
    </MedalCard>
  );
}

function ContinentVisual() {
  return (
    <RightVisuals>
      <VisualTools>
        <VisualTool aria-label="고정"><PinIcon s={36} /></VisualTool>
        <VisualTool aria-label="알림"><BellIcon s={38} /></VisualTool>
        <VisualTool aria-label="필터"><Icon s={38} k={1.500}><path d="M2 5h20M5.500 12h13M9.500 19h5" /></Icon></VisualTool>
        <VisualTool aria-label="포커스 모드"><Icon s={40}><path d="M11 3H6a3 3 0 0 0-3 3v12a3 3 0 0 0 3 3h12a3 3 0 0 0 3-3v-5M15 3h6v6M21 3l-8 8M3 13h6a2 2 0 0 1 2 2v6" /></Icon></VisualTool>
        <VisualTool aria-label="기타 옵션"><Dots s={30} r={2} /></VisualTool>
      </VisualTools>
      <SelectedCard>
        <TableBox>
          <DataTable $head={74} $cols="minmax(0,245fr) minmax(0,114fr) minmax(0,218fr) minmax(0,217fr)">
            <thead>
              <tr>
                <HeadCell $small>대륙</HeadCell>
                <HeadCell $small $num>국가개</HeadCell>
                <HeadCell $small $num>메달 보유 국가</HeadCell>
                <HeadCell $small $num>메달 보유 비율</HeadCell>
              </tr>
            </thead>
            <tbody>
              {continents.map(([name, a, b, c]) => (
                <tr key={name}><Cell>{name}</Cell><Cell $num>{a}</Cell><Cell $num>{b}</Cell><Cell $num>{c}</Cell></tr>
              ))}
            </tbody>
            <tfoot>
              <tr><Cell $bold>합계</Cell><Cell $num $bold>206</Cell><Cell $num $bold>92</Cell><Cell $num $bold>0.45</Cell></tr>
            </tfoot>
          </DataTable>
        </TableBox>
        {handles.map((at, i) => <Handle key={i} $at={at} />)}
      </SelectedCard>
    </RightVisuals>
  );
}

function PageTabs() {
  return (
    <PageBar>
      <ViewButtons>
        <LayoutButton $on $after={56} aria-label="데스크톱 레이아웃">
          <Icon s={42} w={56} box="0 0 56 42"><g fill="currentColor" stroke="none"><rect x="7" y="0" width="42" height="34" rx="6" /><rect x="1" y="37" width="54" height="5" rx="2" /></g></Icon>
        </LayoutButton>
        <LayoutButton $after={40} aria-label="모바일 레이아웃">
          <Icon s={56} k={1.300}><rect x="5.500" y="1" width="13" height="22" rx="2.500" /><path d="M10.500 19h3" /></Icon>
        </LayoutButton>
        <PagerButton aria-label="이전 페이지"><Icon s={24} k={1.600}><path d="M16 4v16L7 12Z" /></Icon></PagerButton>
        <PagerButton aria-label="다음 페이지"><Icon s={24} k={1.600}><path d="M8 4v16l9-8Z" /></Icon></PagerButton>
      </ViewButtons>
      <PageTab $w={140}>홈</PageTab>
      <PageTab $w={174}>개요</PageTab>
      <PageTab $w={317} $on>메달 세부 분석</PageTab>
      <PageTab $w={319}>종목 세부 분석</PageTab>
      <AddPage aria-label="새 페이지"><Icon s={32} k={5}><path d="M12 2v20M2 12h20" strokeLinecap="butt" /></Icon></AddPage>
    </PageBar>
  );
}

function FormatPane() {
  return (
    <Pane $z={2}>
      <PaneHead><PaneTitle>시각화</PaneTitle><button aria-label="축소"><DoubleChevron /></button></PaneHead>
      <SubTitle>시각적 개체 서식 지정</SubTitle>
      <ModeRow>
        <ModeButton aria-label="필드 추가">
          <Icon s={66} k={1.200}><g strokeLinecap="butt"><path d="M1 1.500h18" strokeWidth="1.500" /><rect x="1" y="6" width="22" height="7" strokeDasharray="1.300 1" /><rect x="1" y="16" width="22" height="7" strokeDasharray="1.300 1" /></g></Icon>
        </ModeButton>
        <ModeButton $on aria-label="서식">
          <Icon s={64} k={1.100}><path d="M2 18V9h6M18 6.500h-4" /><path d="M8 1.500h6v11l-4 5H8Z" fill={GREEN} /><path d="m23 9-9 9-1.500-1.500L22 7.500Z" fill="#fff" /><path d="M5 22.500c3-.5 2.500-4 5.500-5 2-.5 3.500 1 3 3-.7 2.500-5 3.500-8.500 2Z" fill={GREEN} /></Icon>
        </ModeButton>
        <ModeButton aria-label="분석">
          <Icon s={66} k={1.100}><circle cx="10" cy="10" r="9" /><path d="M2 10.500 5.500 8 9 10.500 17.500 4M6 12v4M9 13v5M12 12v6M15 10v5" /><path d="m17 16.500 5.500 5.500" strokeWidth="2.400" /></Icon>
        </ModeButton>
      </ModeRow>
      <NotchLine><Icon s={23} w={44} box="0 0 44 23" k={2}><path d="M0 22 22 1 44 22" /></Icon></NotchLine>
      <FormatSearch>
        <Magnifier s={40} flip />
        <TextInput type="text" placeholder="검색" aria-label="서식 검색" />
      </FormatSearch>
      <FormatTabs>
        <FormatTab $on>시각적 개체</FormatTab>
        <FormatTab>일반</FormatTab>
        <FormatTab aria-label="기타"><Dots s={30} r={1.700} /></FormatTab>
      </FormatTabs>
      <FormatList>
        <Sections>
          <SectionButton><Chevron dir="right" k={2.600} />스타일 사전 설정</SectionButton>
          <SectionButton><Chevron dir="right" k={2.600} />눈금</SectionButton>
          <SectionButton><Chevron dir="right" k={2.600} />값</SectionButton>
          <SectionButton $last><Chevron k={2.600} />열 머리글</SectionButton>
          <OpenArea>
            <SubCard>
              <SubHead><Chevron k={2.600} />텍스트</SubHead>
              <Group $after={12}>
                <GroupLabel htmlFor="font">글꼴</GroupLabel>
                <Controls>
                  <SelectWrap><FontSelect id="font"><option>Segoe UI</option></FontSelect><Chevron /></SelectWrap>
                  <SizeWrap>
                    <SizeInput type="number" defaultValue="10" aria-label="글꼴 크기" />
                    <Spinner><Chevron dir="up" s={16} /><Chevron s={16} /></Spinner>
                  </SizeWrap>
                </Controls>
              </Group>
              <Group $after={32}>
                <Controls>
                  <SquareButton $b>B</SquareButton>
                  <SquareButton $i>I</SquareButton>
                  <SquareButton $u>U</SquareButton>
                </Controls>
              </Group>
              <Group>
                <GroupLabel as="span">텍스트 색상</GroupLabel>
                <ColorButton aria-label="텍스트 색상"><Swatch $c={INK} /><Chevron /></ColorButton>
              </Group>
              <Group>
                <GroupLabel as="span">배경색</GroupLabel>
                <ColorButton aria-label="배경색"><Swatch $c="#fff" /><Chevron /></ColorButton>
              </Group>
              <Group $gap={16}>
                <GroupLabel as="span">머리글 맞춤</GroupLabel>
                <Controls>
                  <SquareButton $grey aria-label="왼쪽"><Icon s={40} k={1.500}><path d="M2 4h14M2 12h20M2 20h9" /></Icon></SquareButton>
                  <SquareButton $grey aria-label="가운데"><Icon s={40} k={1.500}><path d="M5 4h14M2 12h20M8 20h8" /></Icon></SquareButton>
                  <SquareButton $grey aria-label="오른쪽"><Icon s={40} k={1.500}><path d="M8 4h14M2 12h20M13 20h9" /></Icon></SquareButton>
                </Controls>
              </Group>
              <ToggleRow>
                자동 줄 바꿈
                <HiddenCheck type="checkbox" defaultChecked />
                <Switch><Icon s={28} k={3.200}><path d="m2 13 6 7L21 4" /></Icon></Switch>
              </ToggleRow>
            </SubCard>
          </OpenArea>
        </Sections>
        <FormatThumb />
      </FormatList>
      <MarkBox $x={-5} $y={825} $w={348} $h={123} />
      <MarkBox $x={282} $y={1116} $w={158} $h={81} />
      <MarkNumber $x={260} $y={663}>1</MarkNumber>
      <MarkNumber $x={426} $y={963}>2</MarkNumber>
    </Pane>
  );
}

function TreeNode({ node }) {
  if (node.k) {
    return (
      <TreeRow $pad={node.deep ? 79 : 40}>
        <TreeToggle>
          <Chevron s={22} />
          <TreeIcon>
            {treeIcons[node.k]}
            {node.tick && <TickBadge><Icon s={18} k={5}><path d="m3 13 6 6L21 6" /></Icon></TickBadge>}
          </TreeIcon>
          {node.t}
        </TreeToggle>
      </TreeRow>
    );
  }
  return (
    <TreeRow $pad={node.deep ? 158 : 118}>
      <FieldLabel>
        <HiddenCheck type="checkbox" defaultChecked={node.on} />
        <Check $on={node.on}>{node.on && <Icon s={26} k={2.800}><path d="m3 13 6 6L21 5" /></Icon>}</Check>
        <TreeIcon>{treeIcons[node.i]}</TreeIcon>
        <FieldText>{node.t}</FieldText>
      </FieldLabel>
    </TreeRow>
  );
}

function DataPane() {
  return (
    <Pane>
      <PaneHead><PaneTitle>데이터</PaneTitle><button aria-label="축소"><DoubleChevron /></button></PaneHead>
      <DataSearch>
        <Magnifier s={42} />
        <TextInput type="text" placeholder="검색" aria-label="데이터 검색" />
      </DataSearch>
      <TreeArea>
        <Tree>{tree.map((n, i) => <TreeNode key={i} node={n} />)}</Tree>
        <TreeThumb />
      </TreeArea>
    </Pane>
  );
}

export default function App() {
  return (
    <Window>
      <Global />
      <BrowserChrome />
      <AppFrame>
        <AppHeader />
        <Body>
          <Sidebar />
          <Main>
            <RibbonBar />
            <Work>
              <Stage>
                <StageRow>
                  <CanvasColumn>
                    <Canvas>
                      <LeftVisuals>
                        <TitleCard>메달 세부 분석</TitleCard>
                        <MedalTable />
                      </LeftVisuals>
                      <ContinentVisual />
                    </Canvas>
                    <Underlay />
                  </CanvasColumn>
                  <FilterRail>
                    <button aria-label="확장"><DoubleChevron left /></button>
                    <FilterGlyph><Icon s={28} k={2.600}><path d="M4 9v6M12 6v12M20 1v22" /></Icon></FilterGlyph>
                    <FilterLabel>필터</FilterLabel>
                  </FilterRail>
                </StageRow>
                <PageTabs />
              </Stage>
              <FormatPane />
              <DataPane />
            </Work>
            <Status>
              3/4 페이지
              <ZoomGroup>
                <ZoomSign aria-label="축소">-</ZoomSign>
                <ZoomRange type="range" min="0" max="100" defaultValue="40" aria-label="확대/축소" />
                <ZoomSign aria-label="확대">+</ZoomSign>
                <ZoomValue>83%</ZoomValue>
                <button aria-label="페이지에 맞춤"><Icon s={36} k={1.700}><rect x="1.500" y="3" width="21" height="18" rx="2.500" /><path d="M6 10V7h3M15 7h3v3M18 14v3h-3M9 17H6v-3" /></Icon></button>
              </ZoomGroup>
            </Status>
          </Main>
        </Body>
      </AppFrame>
    </Window>
  );
}
